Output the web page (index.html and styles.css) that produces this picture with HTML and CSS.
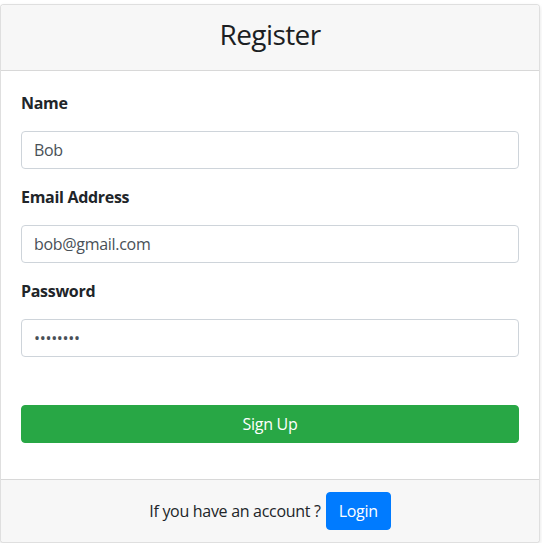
FILE: index.html
```html
<!DOCTYPE html>
<html lang="en">
<head>
<meta charset="utf-8">
<title>Register</title>
<link rel="stylesheet" href="styles.css">
</head>
<body>
<div class="page">
  <div class="card">
    <div class="card-header">
      <h3 class="title">Register</h3>
    </div>
    <form class="card-body">
      <div class="form-group">
        <label class="label">Name</label>
        <input class="input" type="text" value="Bob">
      </div>
      <div class="form-group">
        <label class="label">Email Address</label>
        <input class="input" type="email" value="bob@gmail.com">
      </div>
      <div class="form-group">
        <label class="label">Password</label>
        <input class="input" type="password" value="password">
      </div>
      <button class="btn btn-success" type="button">Sign Up</button>
    </form>
    <div class="card-footer">
      <span class="footer-text">If you have an account ?</span>
      <button class="btn btn-primary" type="button">Login</button>
    </div>
  </div>
</div>
</body>
</html>
```

FILE: styles.css
```css
* { box-sizing: border-box; }
html, body { margin: 0; padding: 0; background: #fff; }
body {
  font-family: "Open Sans", "Noto Sans", "DejaVu Sans", sans-serif;
  font-size: 16px;
  line-height: 24px;
  color: #212529;
  letter-spacing: -0.3px;
}
.page {
  padding: 4px 2px 0 0;
}
.card {
  display: flex;
  flex-direction: column;
  border: 1px solid rgba(0,0,0,.125);
  border-radius: 4px;
  background: #fff;
  box-shadow: 0 2px 4px rgba(0,0,0,.12);
  overflow: hidden;
}
.card-header {
  background: #f7f7f7;
  border-bottom: 1px solid rgba(0,0,0,.125);
  padding: 12px 20px 0;
  height: 66px;
  text-align: center;
}
.title {
  margin: 0;
  font-size: 28px;
  line-height: 34px;
  font-weight: 500;
  letter-spacing: -0.6px;
  color: #1c1f23;
}
.card-body {
  display: flex;
  flex-direction: column;
  padding: 20px 20px 36px;
  margin: 0;
}
.form-group {
  display: flex;
  flex-direction: column;
  margin-bottom: 16px;
}
.form-group:last-of-type { margin-bottom: 48px; }
.label {
  font-weight: 700;
  margin-bottom: 16px;
}
.input {
  height: 38px;
  padding: 6px 12px;
  font: inherit;
  letter-spacing: -0.3px;
  color: #495057;
  border: 1px solid #ced4da;
  border-radius: 4px;
  background: #fff;
}
.btn {
  font: inherit;
  letter-spacing: -0.3px;
  height: 38px;
  border: 1px solid transparent;
  border-radius: 4px;
  color: #fff;
  padding: 6px 12px;
}
.btn-success { background: #28a745; border-color: #28a745; width: 100%; }
.btn-primary { background: #007bff; border-color: #007bff; }
.card-footer {
  background: #f7f7f7;
  border-top: 1px solid rgba(0,0,0,.125);
  padding: 12px 20px;
  display: flex;
  justify-content: center;
  align-items: center;
  gap: 5px;
}
```
